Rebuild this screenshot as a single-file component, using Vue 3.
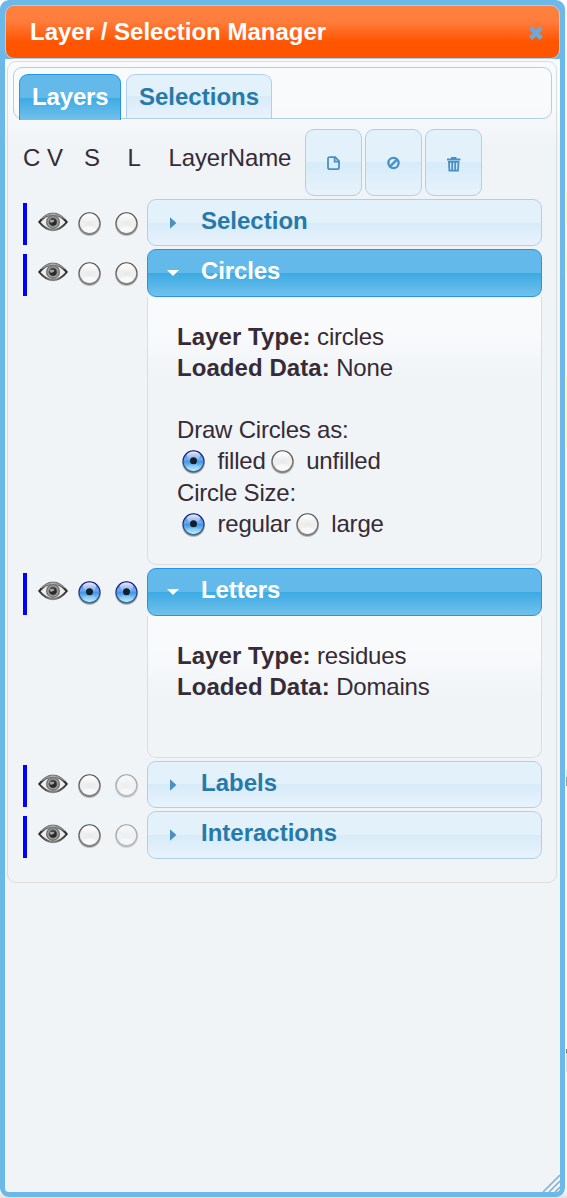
<script setup>
import { h } from 'vue'

const layers = [
  { name: 'Selection', height: 47, bar: 4, s: false, l: false },
  { name: 'Circles', height: 316, bar: 5, s: false, l: false, open: true, type: 'circles', data: 'None', options: true },
  { name: 'Letters', height: 190, bar: 5, s: true, l: true, open: true, type: 'residues', data: 'Domains' },
  { name: 'Labels', height: 47, bar: 4, s: false, l: false, disabled: true },
  { name: 'Interactions', height: 48, bar: 5, s: false, l: false, disabled: true }
]

const Radio = (props) =>
  h('svg', { class: 'radio', width: 26, height: 28, viewBox: '0 0 26 28', opacity: props.disabled ? 0.5 : 1 }, [
    h('circle', { cx: 12.5, cy: 14.4, r: 12, fill: 'url(#shade)' }),
    h('circle', { cx: 12.5, cy: 13.2, r: 10.5, fill: props.on ? 'url(#blueFill)' : 'url(#greyFill)', stroke: props.on ? 'url(#blueRim)' : 'url(#greyRim)', 'stroke-width': 1.1 }),
    h('ellipse', { cx: 12.5, cy: 7.6, rx: 6.8, ry: 4, fill: 'url(#gloss)' }),
    h('ellipse', { cx: 12.5, cy: 19.5, rx: 6.5, ry: 3.2, fill: '#fff', opacity: props.on ? 0.15 : 0.6 }),
    props.on ? h('circle', { cx: 12.5, cy: 12.8, r: 3.5, fill: '#10202e' }) : null
  ])
Radio.props = { on: Boolean, disabled: Boolean }
</script>

<template>
  <div class="page">
    <svg class="defs" width="0" height="0">
      <defs>
        <radialGradient id="shade">
          <stop offset=".8" stop-color="#000" stop-opacity=".6" /><stop offset="1" stop-color="#000" stop-opacity="0" />
        </radialGradient>
        <radialGradient id="greyFill" cx=".5" cy=".5" r=".5">
          <stop offset="0" stop-color="#e9e9e9" /><stop offset=".7" stop-color="#f0f0f0" />
          <stop offset=".86" stop-color="#ededed" /><stop offset="1" stop-color="#b8b8b8" />
        </radialGradient>
        <linearGradient id="greyRim" x1="0" y1="0" x2="0" y2="1">
          <stop offset="0" stop-color="#4c4c4c" /><stop offset="1" stop-color="#858585" />
        </linearGradient>
        <linearGradient id="blueFill" x1="0" y1="0" x2="0" y2="1">
          <stop offset="0" stop-color="#3a5fc4" /><stop offset=".4" stop-color="#71aef0" />
          <stop offset=".52" stop-color="#4595e6" /><stop offset="1" stop-color="#b2f2ff" />
        </linearGradient>
        <linearGradient id="blueRim" x1="0" y1="0" x2="0" y2="1">
          <stop offset="0" stop-color="#101078" /><stop offset="1" stop-color="#396894" />
        </linearGradient>
        <linearGradient id="gloss" x1="0" y1="0" x2="0" y2="1">
          <stop offset="0" stop-color="#fff" stop-opacity=".9" /><stop offset="1" stop-color="#fff" stop-opacity=".15" />
        </linearGradient>
        <linearGradient id="lid" x1="0" y1="0" x2="1" y2="0">
          <stop offset="0" stop-color="#222" /><stop offset=".5" stop-color="#8c8c8c" /><stop offset="1" stop-color="#222" />
        </linearGradient>
      </defs>
    </svg>

    <section class="dialog">
      <header class="titlebar">
        <span>Layer / Selection Manager</span>
        <svg class="close" width="14" height="14" viewBox="0 0 14 14">
          <path d="M1.6 1.6 12.4 12.4M12.4 1.6 1.6 12.4" stroke="#6ea8d6" stroke-width="4.4" />
        </svg>
      </header>

      <main class="panel">
        <nav class="tabs">
          <a class="tab active">Layers</a>
          <a class="tab">Selections</a>
        </nav>

        <div class="columns">
          <span class="c">C</span><span class="v">V</span><span class="s">S</span><span class="l">L</span>
          <span class="n">LayerName</span>
          <button class="tool">
            <svg width="16" height="16" viewBox="0 0 16 16">
              <path d="M3.6 2.2H9.2L13 6V12.6Q13 14.2 11.4 14.2H3.6Q2 14.2 2 12.6V3.8Q2 2.2 3.6 2.2ZM8.6 2.4V6.6H12.8" fill="none" stroke="#4a90c5" stroke-width="1.8" />
            </svg>
          </button>
          <button class="tool">
            <svg width="16" height="16" viewBox="0 0 16 16">
              <circle cx="7.5" cy="8" r="5.1" fill="none" stroke="#4a90c5" stroke-width="2.3" />
              <path d="M3.9 11.6 11.1 4.4" stroke="#4a90c5" stroke-width="2.3" />
            </svg>
          </button>
          <button class="tool">
            <svg class="trash" width="16" height="18" viewBox="0 0 16 18">
              <path d="M1 4.5H14.4M5 3H10.4" stroke="#4a90c5" stroke-width="1.9" />
              <path d="M2.9 6.8H12.5L12 15.6H3.4ZM6.2 7V15M9.2 7V15" fill="none" stroke="#4a90c5" stroke-width="1.8" />
            </svg>
          </button>
        </div>

        <div class="layers">
          <div v-for="layer in layers" :key="layer.name" class="layer" :style="{ height: layer.height + 'px' }">
            <i class="bar" :style="{ marginTop: layer.bar + 'px' }"></i>
            <svg class="eye" width="32" height="22" viewBox="0 0 32 22">
              <path d="M1 11Q8 1.5 16 1.5T31 11Q24 20.2 16 20.2T1 11Z" fill="url(#lid)" />
              <path d="M3.6 11.2Q9.5 4.6 16 4.6T28.4 11.2Q22.5 17.8 16 17.8T3.6 11.2Z" fill="#eceeef" />
              <path d="M4 7.8Q9.5 3.2 16 3.2T28 7.8" fill="none" stroke="#bbb" stroke-width=".8" />
              <circle cx="16" cy="10.9" r="7" fill="#6c6c6c" />
              <circle cx="16" cy="10.9" r="5.1" fill="none" stroke="#a8a8a8" stroke-width="1.1" />
              <circle cx="16" cy="11.1" r="3.6" fill="#2a2a2a" />
              <path d="M12.5 8.8H17.2V10.6L14 12Q12.6 10.8 12.5 8.8Z" fill="#a4a4a4" />
            </svg>
            <Radio class="pick" :on="layer.s" />
            <Radio class="pick" :on="layer.l" :disabled="layer.disabled" />
            <div class="accordion">
              <h3 class="head" :class="{ open: layer.open, tall: layer.height === 48 }">
                <svg class="arrow" width="16" height="16" viewBox="0 0 16 16">
                  <path v-if="layer.open" d="M2 5H14L8 11Z" fill="#fff" />
                  <path v-else d="M5 2.2 11.4 8 5 13.8Z" fill="#4a90c5" />
                </svg>
                <span>{{ layer.name }}</span>
              </h3>
              <div v-if="layer.open" class="body">
                <div><b>Layer Type:</b> {{ layer.type }}</div>
                <div><b>Loaded Data:</b> {{ layer.data }}</div>
                <template v-if="layer.options">
                  <div class="first">Draw Circles as:</div>
                  <div class="choice"><Radio on /><span>filled</span><Radio /><span>unfilled</span></div>
                  <div class="second">Circle Size:</div>
                  <div class="choice"><Radio on /><span>regular</span><Radio /><span>large</span></div>
                </template>
              </div>
            </div>
          </div>
        </div>
      </main>

      <svg class="grip" width="18" height="18" viewBox="0 0 18 18">
        <path d="M1 18 18 1M7 18 18 7M13 18 18 13" stroke="#85b4d8" stroke-width="1.7" />
      </svg>
    </section>
    <div class="backdrop"></div>
  </div>
</template>

<style>
body { background: #fff; }
</style>

<style scoped>
* { box-sizing: border-box; }
.page { position: relative; width: 567px; height: 1198px; background: linear-gradient(#fff 1190px, #e6e3e0 1197px); font: 24px/31px "Liberation Sans", Arial, sans-serif; color: #362b36; overflow: hidden; }
.defs { position: absolute; }
/* sliver of the drawing canvas behind the dialog */
.backdrop { position: absolute; top: 0; right: 0; width: 1px; height: 1190px; background: linear-gradient(transparent 192px, #fbfba8 192px 224px, transparent 224px 248px, #fdfdcc 248px 275px, transparent 275px 297px, transparent 376px, #fbfba8 376px 448px, transparent 448px 770px, #d5eadf 770px 777px, #999 777px 786px, transparent 786px 1049px, #777 1049px 1053px, #ddd 1053px 1072px, transparent 1072px); }
.dialog { position: relative; width: 565px; height: 1197px; border: 5px solid #6cb9e9; border-radius: 9px; background: linear-gradient(#f9fafc 100px, #f0f4f7 142px); }
.dialog::before { content: ""; position: absolute; inset: 0 0 auto; height: 54px; background: #6cb9e9; }
.titlebar { position: relative; display: flex; align-items: flex-start; justify-content: space-between; height: 54px; padding: 10px 16px 0 24px; border: 1px solid #aed0ea; border-radius: 9px; background: linear-gradient(#ff8040 0, #ff7d3c 15px, #ff5500 36px); color: #fff; font-weight: 700; }
.close { margin-top: 10px; }
.panel { width: 550px; height: 822px; margin: 2px 0 0 2px; padding: 5px; border: 1px solid #dddddd; border-radius: 9px; background: linear-gradient(#f9fafc 42px, #f0f4f7 86px); }
.tabs { display: flex; align-items: flex-start; gap: 5px; width: 539px; height: 52px; padding: 6px 5px 0; border: 1px solid #aed0ea; border-radius: 9px; }
.tab { height: 44px; width: 146px; padding: 6px 0 0 12px; border: 1px solid #aed0ea; border-bottom: 0; border-radius: 9px 9px 0 0; background: linear-gradient(#e3f1fa 50%, #d7ebf9 50%, #e8f3fc); color: #2779aa; font-weight: 700; }
.tab.active { width: 102px; height: 46px; border-color: #2694e8; background: linear-gradient(#63b9e9 50%, #3baae3 50%, #72c1eb); color: #fff; letter-spacing: -.15px; }
.columns { display: flex; align-items: flex-start; height: 67px; margin: 10px 0 0 10px; letter-spacing: -.15px; }
.columns span { margin-top: 13px; }
.c { width: 24px; } .v { width: 37px; } .s { width: 43.5px; } .l { width: 41px; } .n { width: 136.5px; }
.tool { width: 57px; height: 67px; margin-right: 3px; padding: 0; border: 1px solid #aed0ea; border-radius: 9px; background: linear-gradient(#e3f1fa 50%, #d7ebf9 50%, #e8f3fc); display: flex; align-items: center; justify-content: center; }
.trash { margin-top: 2px; }
.layers { display: flex; flex-direction: column; gap: 3px; margin-top: 3px; padding-left: 10px; }
.layer { display: flex; align-items: flex-start; }
.bar { width: 4px; height: 42px; background: #0000ff; }
.eye { margin: 12px 0 0 10px; }
.pick { margin: 11px 0 0 8px; }
.pick + .pick { margin-left: 11px; }
.accordion { width: 395px; margin-left: 7px; height: 100%; display: flex; flex-direction: column; }
.head { display: flex; align-items: flex-start; height: 47px; margin: 0; padding: 5px 0 0 17px; border: 1px solid #aed0ea; border-radius: 9px; background: linear-gradient(#e3f1fa 50%, #d7ebf9 50%, #e8f3fc); color: #2779aa; font-size: 24px; flex: none; }
.head.open { height: 48px; border-color: #2694e8; background: linear-gradient(#63b9e9 50%, #3baae3 50%, #72c1eb); color: #fff; letter-spacing: -.1px; }
.head.tall { height: 48px; }
.arrow { margin: 10px 20px 0 0; }
.body { flex: 1; padding: 24px 29px 0; line-height: 31.2px; letter-spacing: -.2px; border: 1px solid #dddddd; border-top: 0; border-radius: 0 0 9px 9px; background: linear-gradient(#f9fafc 34px, #f0f4f7 82px); }
.body b { letter-spacing: .06px; }
.first { margin-top: 30.3px; }
.second { margin-top: .8px; }
.choice { display: flex; height: 31.2px; align-items: flex-start; }
.choice .radio { margin: 3px 10.5px 0 4px; }
.grip { position: absolute; right: 0; bottom: 0; }
</style>
